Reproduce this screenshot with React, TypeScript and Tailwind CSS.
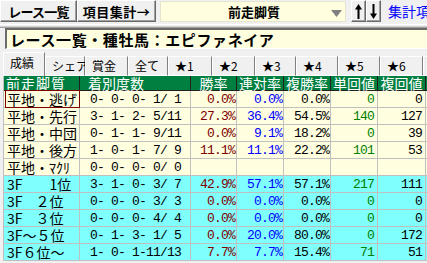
import React from "react";

const JP = "font-['Noto_Sans_CJK_JP',sans-serif]";
const MONO = "font-['Liberation_Mono',monospace]";
const NUM = `${MONO} text-[13px] tracking-[-0.8px] leading-none`;

type Row = {
  label: React.ReactNode;
  rec: string;
  win: string;
  ren: string;
  fuku: string;
  tan: string;
  fk: string;
  cyan?: boolean;
  sel?: boolean;
};

const f3 = (rest: string, ml: string) => (
  <>
    3F<span className={`${ml} inline-block`}>{rest}</span>
  </>
);

const rows: Row[] = [
  { label: "平地・逃げ", rec: "0- 0- 0- 1/ 1", win: "0.0%", ren: "0.0%", fuku: "0.0%", tan: "0", fk: "0", sel: true },
  { label: "平地・先行", rec: "3- 1- 2- 5/11", win: "27.3%", ren: "36.4%", fuku: "54.5%", tan: "140", fk: "127" },
  { label: "平地・中団", rec: "0- 1- 1- 9/11", win: "0.0%", ren: "9.1%", fuku: "18.2%", tan: "0", fk: "39" },
  { label: "平地・後方", rec: "1- 0- 1- 7/ 9", win: "11.1%", ren: "11.1%", fuku: "22.2%", tan: "101", fk: "53" },
  { label: "平地・ﾏｸﾘ", rec: "0- 0- 0- 0/ 0", win: "", ren: "", fuku: "", tan: "", fk: "" },
  { label: f3("1位", "ml-[27px]"), rec: "3- 1- 0- 3/ 7", win: "42.9%", ren: "57.1%", fuku: "57.1%", tan: "217", fk: "111", cyan: true },
  { label: f3("２位", "ml-[13px]"), rec: "0- 0- 0- 3/ 3", win: "0.0%", ren: "0.0%", fuku: "0.0%", tan: "0", fk: "0", cyan: true },
  { label: f3("３位", "ml-[13px]"), rec: "0- 0- 0- 4/ 4", win: "0.0%", ren: "0.0%", fuku: "0.0%", tan: "0", fk: "0", cyan: true },
  { label: f3("～５位", "ml-[0px]"), rec: "0- 1- 3- 1/ 5", win: "0.0%", ren: "20.0%", fuku: "80.0%", tan: "0", fk: "172", cyan: true },
  { label: f3("６位～", "ml-[0px]"), rec: "1- 0- 1-11/13", win: "7.7%", ren: "7.7%", fuku: "15.4%", tan: "71", fk: "51", cyan: true },
];

const tabs = [
  { t: "成績", w: "w-[42px]" },
  { t: "シェア", w: "w-[40px]" },
  { t: "賞金", w: "w-[43px]" },
  { t: "全て", w: "w-[40px]" },
  { t: "★1", w: "w-[44px]" },
  { t: "★2", w: "w-[43px]" },
  { t: "★3", w: "w-[41px]" },
  { t: "★4", w: "w-[42px]" },
  { t: "★5", w: "w-[42px]" },
  { t: "★6", w: "w-[43px]" },
  { t: "★7", w: "w-[43px]" },
];

function Btn({ children, w }: { children: React.ReactNode; w: string }) {
  return (
    <div
      className={`${w} h-[22px] flex items-center justify-center bg-[#f0f0f0] border-t border-l border-t-white border-l-white border-r border-b border-r-[#696969] border-b-[#696969] shadow-[inset_-1px_-1px_0_#a0a0a0]`}
    >
      {children}
    </div>
  );
}

function Arrow({ up }: { up?: boolean }) {
  return (
    <svg width="9" height="15" viewBox="0 0 9 15">
      {up ? (
        <>
          <polygon points="4.5,0 1,5.5 8,5.5" fill="#000" />
          <rect x="3.5" y="5" width="2" height="10" fill="#000" />
        </>
      ) : (
        <>
          <polygon points="4.5,15 1,9.5 8,9.5" fill="#000" />
          <rect x="3.5" y="0" width="2" height="10" fill="#000" />
        </>
      )}
    </svg>
  );
}

const cellW = ["w-[76px]", "w-[111px]", "w-[46px]", "w-[47px]", "w-[47px]", "w-[47px]", "w-[48px]", "w-[60px]"];

export default function App() {
  return (
    <div className={`w-[427px] h-[263px] overflow-hidden bg-[#f0f0f0] ${JP} text-black`}>
      {/* toolbar */}
      <div className="flex items-start h-[23px] w-[600px]">
        <Btn w="w-[77px]">
          <span className="text-[13px] font-bold tracking-[-0.8px] leading-none">レース一覧</span>
        </Btn>
        <Btn w="w-[79px]">
          <span className="text-[13px] font-bold leading-none tracking-[0.5px]">項目集計→</span>
        </Btn>
        <div className="ml-[4px] w-[186px] h-[21px] mt-[1px] bg-[#ffffe0] border border-[#e4e4d0] flex items-center relative">
          <span className="ml-[67px] text-[13px] font-bold leading-none">前走脚質</span>
          <svg className="absolute left-[170px] top-[8px]" width="11" height="7" viewBox="0 0 11 7">
            <polygon points="0,0 11,0 5.5,7" fill="#808080" />
          </svg>
        </div>
        <div className="ml-[5px] flex">
          <Btn w="w-[15px]">
            <Arrow up />
          </Btn>
          <Btn w="w-[15px]">
            <Arrow />
          </Btn>
        </div>
        <span className="ml-[7px] mt-[4px] text-[14px] leading-none text-[#0000ff] whitespace-nowrap">集計項目</span>
      </div>
      {/* separator */}
      <div className="h-[5px] flex flex-col">
        <div className="h-[1px] bg-white mt-[1px]" />
        <div className="h-[1px] bg-[#d0d0d0] mt-[1px]" />
        <div className="h-[1px] bg-[#a0a0a0]" />
      </div>
      {/* title */}
      <div className="ml-[5px] h-[21px] bg-[#ffffe0] border-t-2 border-l-2 border-t-[#6a6a6a] border-l-[#6a6a6a] border-b border-b-white flex items-center">
        <span className="ml-[3px] text-[15px] font-bold leading-none tracking-[0.6px] whitespace-nowrap">
          レース一覧・種牡馬：エピファネイア
        </span>
      </div>
      {/* tabs */}
      <div className="mt-[3px] ml-[3px] flex items-end h-[24px] w-[600px]">
        {tabs.map((t, i) => (
          <div
            key={t.t}
            className={`${t.w} shrink-0 bg-[#f0f0f0] border-t border-l border-t-white border-l-white border-r border-r-[#808080] flex items-center pl-[6px] text-[12px] leading-none whitespace-nowrap ${
              i === 0 ? "h-[24px] pb-[3px]" : "h-[20px] border-b border-b-white"
            }`}
          >
            <span className="leading-none">{t.t}</span>
          </div>
        ))}
      </div>
      {/* table */}
      <div className="ml-[3px] w-[600px] border-l border-[#c0c0c0]">
        <div className="flex h-[15px] bg-[#008040] border-b border-b-[#202020] text-white text-[14px] leading-none">
          {["前走脚質", "着別度数", "勝率", "連対率", "複勝率", "単回値", "複回値", ""].map((h, i) => (
            <div
              key={i}
              className={`${cellW[i]} shrink-0 border-r border-r-[#202020] flex items-center whitespace-nowrap ${
                i === 0 ? "pl-[2px]" : i === 1 ? "pl-[8px]" : "justify-center"
              }`}
            >
              <span className={`leading-none ${i === 0 ? "tracking-[1px]" : ""}`}>{h}</span>
            </div>
          ))}
        </div>
        {rows.map((r, ri) => (
          <div
            key={ri}
            className={`flex h-[17px] border-b border-b-[#c0c0c0] ${r.cyan ? "bg-[#80ffff]" : "bg-[#ffffe0]"}`}
          >
            <div className={`${cellW[0]} shrink-0 border-r border-r-[#c0c0c0] flex items-center pl-[3px] relative text-[14px] leading-none`}>
              <span className="leading-none whitespace-nowrap">{r.label}</span>
              {r.sel && <div className="absolute left-[1px] top-[-1px] right-[-1px] bottom-[-1px] border border-[#800000]" />}
            </div>
            <div className={`${cellW[1]} shrink-0 border-r border-r-[#c0c0c0] flex items-center pl-[10px]`}>
              <span className={`${NUM} whitespace-pre`}>{r.rec}</span>
            </div>
            <div className={`${cellW[2]} shrink-0 border-r border-r-[#c0c0c0] flex items-center justify-end pr-[1px]`}>
              <span className={`${NUM} text-[#800000]`}>{r.win}</span>
            </div>
            <div className={`${cellW[3]} shrink-0 border-r border-r-[#c0c0c0] flex items-center justify-end pr-[1px]`}>
              <span className={`${NUM} text-[#0000ff]`}>{r.ren}</span>
            </div>
            <div className={`${cellW[4]} shrink-0 border-r border-r-[#c0c0c0] flex items-center justify-end pr-[1px]`}>
              <span className={NUM}>{r.fuku}</span>
            </div>
            <div className={`${cellW[5]} shrink-0 border-r border-r-[#c0c0c0] flex items-center justify-end pr-[3px]`}>
              <span className={`${NUM} text-[#008000]`}>{r.tan}</span>
            </div>
            <div className={`${cellW[6]} shrink-0 border-r border-r-[#c0c0c0] flex items-center justify-end pr-[3px]`}>
              <span className={NUM}>{r.fk}</span>
            </div>
            <div className={`${cellW[7]} shrink-0 border-r border-r-[#c0c0c0]`} />
          </div>
        ))}
      </div>
    </div>
  );
}
